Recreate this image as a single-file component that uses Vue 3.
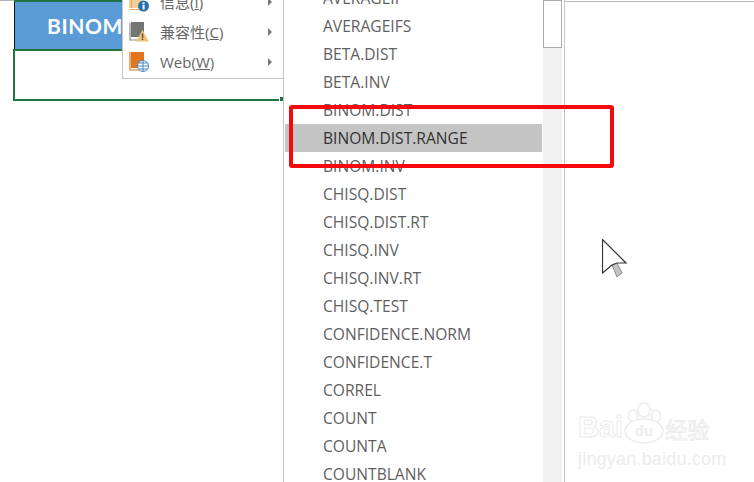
<script setup>
const functions = [
  'AVERAGEIF', 'AVERAGEIFS', 'BETA.DIST', 'BETA.INV', 'BINOM.DIST', 'BINOM.DIST.RANGE', 'BINOM.INV',
  'CHISQ.DIST', 'CHISQ.DIST.RT', 'CHISQ.INV', 'CHISQ.INV.RT', 'CHISQ.TEST', 'CONFIDENCE.NORM',
  'CONFIDENCE.T', 'CORREL', 'COUNT', 'COUNTA', 'COUNTBLANK'
];
const activeItem = 'BINOM.DIST.RANGE';
</script>

<template>
  <div class="page">
    <section class="sheet">
      <div class="top-rule"></div>
      <div class="header-cell">BINOM.DIST.RANGE</div>
      <div class="selected-cell"><span class="handle"></span></div>

      <div class="menu">
        <div class="menu-item">
          <svg class="menu-icon" viewBox="0 0 20 20">
            <path d="M0 0h14v16H0z" fill="#f2cf94" />
            <path d="M2.500 0v16M0 17.500h11" fill="none" stroke="#e3a857" stroke-width="1" />
            <circle cx="14.500" cy="14" r="5.500" fill="#2a6fb0" />
            <rect x="13.600" y="13" width="2" height="4.500" fill="#fff" />
            <rect x="13.600" y="10.400" width="2" height="1.800" fill="#fff" />
          </svg>
          <span class="menu-label">信息(<u>I</u>)</span>
          <span class="arrow"></span>
        </div>
        <div class="menu-item">
          <svg class="menu-icon" viewBox="0 0 20 20">
            <path d="M2 0h13v15H2z" fill="#757575" />
            <path d="M1 1v17h9" fill="none" stroke="#8a8a8a" stroke-width="1.200" />
            <path d="M13.500 8l6.500 11.500H7z" fill="#eec27d" />
            <rect x="12.800" y="11.500" width="1.500" height="4.200" fill="#5a4a2a" />
            <rect x="12.800" y="16.500" width="1.500" height="1.500" fill="#5a4a2a" />
          </svg>
          <span class="menu-label">兼容性(<u>C</u>)</span>
          <span class="arrow"></span>
        </div>
        <div class="menu-item">
          <svg class="menu-icon" viewBox="0 0 20 20">
            <path d="M2 0h13v16H2z" fill="#e2761d" />
            <path d="M1 0v18h10" fill="none" stroke="#e2761d" stroke-width="1.200" />
            <circle cx="14" cy="14" r="5.500" fill="#fff" stroke="#4a86c5" stroke-width="1" />
            <path d="M8.500 14h11M14 8.500v11M9.500 11h9M9.500 17h9" fill="none" stroke="#4a86c5" stroke-width="1" />
          </svg>
          <span class="menu-label">Web(<u>W</u>)</span>
          <span class="arrow"></span>
        </div>
      </div>
    </section>

    <section class="list-panel">
      <ul class="fn-list">
        <li v-for="fn in functions" :key="fn" class="fn-item" :class="{ active: fn === activeItem }">{{ fn }}</li>
      </ul>
      <div class="scrollbar"><div class="thumb"></div></div>
    </section>

    <section class="blank">
      <div class="blank-rule"></div>
    </section>

    <div class="red-box"></div>

    <svg class="cursor" viewBox="0 0 26 40" width="26" height="40">
      <path d="M10 26l5 12 5-4-5-10z" fill="#c4c4c4" stroke="#8c8c8c" stroke-width="1" />
      <path d="M0.500 0.500V34L10 26l5-2h9z" fill="#fff" stroke="#33333d" stroke-width="1.200" />
    </svg>

    <div class="watermark">
      <div class="wm-row">
        <span class="wm-bai">Bai</span>
        <svg class="wm-paw" viewBox="0 0 42 42" width="42" height="42">
          <g fill="#fff" stroke="#ececec" stroke-width="1.500">
            <ellipse cx="10" cy="14" rx="4.500" ry="6" />
            <ellipse cx="21" cy="8" rx="6" ry="7" />
            <ellipse cx="33" cy="14" rx="4.500" ry="6" />
            <ellipse cx="21" cy="29" rx="19" ry="12" />
          </g>
          <text x="21" y="34" text-anchor="middle" class="wm-du">du</text>
        </svg>
        <span class="wm-cn">经验</span>
      </div>
      <div class="wm-url">jingyan.baidu.com</div>
    </div>
  </div>
</template>

<style scoped>
.page {
  position: relative;
  display: flex;
  width: 754px;
  height: 482px;
  overflow: hidden;
  background: #fff;
  font-family: "Open Sans", "Noto Sans CJK SC", sans-serif;
}

.sheet {
  position: relative;
  flex: none;
  width: 283px;
  padding-left: 13px;
  box-sizing: border-box;
}

.top-rule {
  height: 2px;
  margin-left: 1px;
  background: #217346;
  box-shadow: -14px -1px 0 #b5b5b5;
}

.header-cell {
  height: 47px;
  margin-left: 1px;
  border-left: 1px solid #111;
  background: #5b9bd5;
  color: #fff;
  font-family: "Lato", sans-serif;
  font-size: 21px;
  font-weight: 700;
  letter-spacing: 0.6px;
  line-height: 47px;
  padding-left: 32px;
  white-space: nowrap;
  overflow: hidden;
}

.selected-cell {
  position: relative;
  height: 48px;
  border: 2px solid #217346;
  border-right: none;
  background: #fff;
}

.handle {
  position: absolute;
  right: 0;
  bottom: -2px;
  width: 3px;
  height: 4px;
  background: #217346;
  box-shadow: -1px 0 0 #fff;
}

.menu {
  position: absolute;
  left: 122px;
  top: -13px;
  width: 161px;
  height: 92px;
  box-sizing: border-box;
  border-left: 1px solid #c6c6c6;
  border-bottom: 1px solid #c6c6c6;
  background: #fff;
}

.menu-item {
  display: flex;
  align-items: center;
  height: 30px;
  padding-left: 6px;
  color: #666;
  font-size: 15px;
  line-height: 20px;
}

.menu-icon {
  flex: none;
  width: 20px;
  height: 20px;
}

.menu-label {
  margin-left: 11px;
  flex: 1;
}

.arrow {
  width: 0;
  height: 0;
  margin-right: 11px;
  border-left: 4px solid #777;
  border-top: 4px solid transparent;
  border-bottom: 4px solid transparent;
}

.list-panel {
  display: flex;
  flex: none;
  width: 282px;
  height: 482px;
  box-sizing: border-box;
  border-left: 1px solid #c6c6c6;
  border-right: 1px solid #c6c6c6;
  background: #fff;
  padding-right: 2px;
}

.fn-list {
  flex: 1;
  list-style: none;
  margin: -16px 0 0;
  padding: 0 1px 0 1px;
}

.fn-item {
  height: 28px;
  padding-left: 38px;
  color: #5f5f5f;
  font-size: 15.6px;
  line-height: 28px;
}

.fn-item.active {
  background: #c4c4c4;
  color: #333;
}

.scrollbar {
  flex: none;
  width: 19px;
  background: #f1f1f1;
}

.thumb {
  height: 48px;
  box-sizing: border-box;
  border: 1px solid #ababab;
  background: #fff;
}

.blank {
  flex: 1;
}

.blank-rule {
  height: 1px;
  margin-top: 1px;
  background: #b5b5b5;
}

.red-box {
  position: absolute;
  left: 289px;
  top: 105px;
  width: 325px;
  height: 63px;
  box-sizing: border-box;
  border: 4px solid #f40a0a;
  border-radius: 3px;
}

.cursor {
  position: absolute;
  left: 602px;
  top: 239px;
}

.watermark {
  position: absolute;
  left: 578px;
  top: 402px;
  color: #fff;
}

.wm-row {
  display: flex;
  align-items: flex-end;
}

.wm-bai {
  font-family: "Liberation Sans", sans-serif;
  font-size: 29px;
  font-weight: 700;
  line-height: 34px;
  -webkit-text-stroke: 1px #ececec;
}

.wm-paw {
  flex: none;
}

.wm-du {
  font-family: "Liberation Sans", sans-serif;
  font-size: 15px;
  font-weight: 700;
  fill: #ececec;
  stroke: none;
}

.wm-cn {
  font-family: "Noto Sans CJK SC", sans-serif;
  font-size: 22px;
  line-height: 32px;
  -webkit-text-stroke: 1px #ececec;
}

.wm-url {
  margin-top: 5px;
  color: #ececec;
  font-family: "Liberation Sans", sans-serif;
  font-size: 18px;
  line-height: 20px;
  letter-spacing: 0.2px;
}
</style>
